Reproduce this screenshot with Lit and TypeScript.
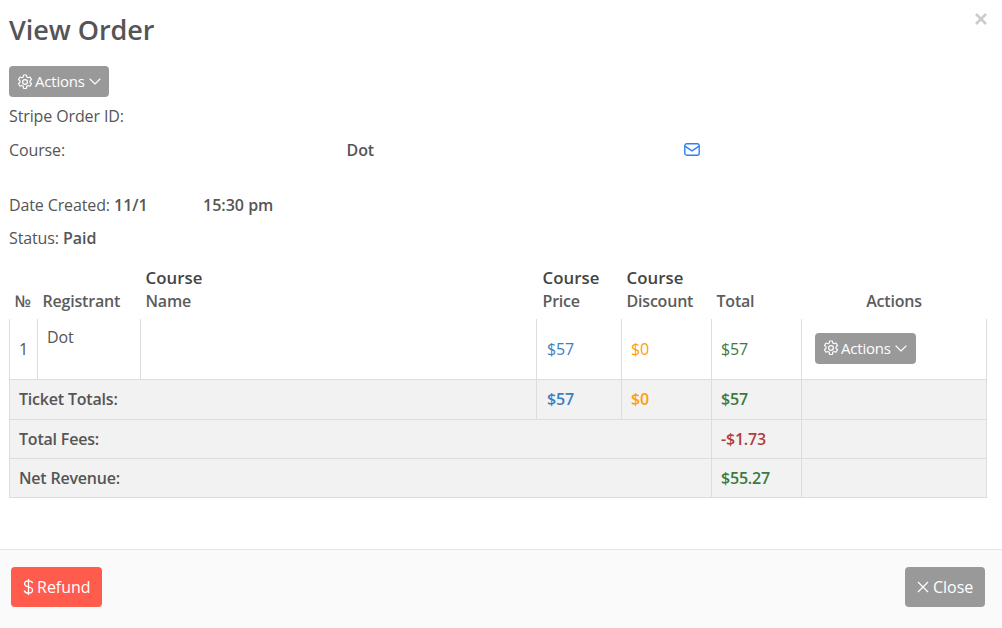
import { LitElement, html, css, svg } from 'lit';
import { customElement } from 'lit/decorators.js';

const gear = html`<svg class="ico" viewBox="0 0 16 16" fill="none" stroke="currentColor" stroke-width="1.2" stroke-linejoin="round">
  ${svg`<path d="M6.6 1h2.8l.4 2 1.3.7 1.9-.7 1.5 2.5-1.5 1.4v1.4l1.5 1.4-1.5 2.5-1.9-.7-1.3.7-.4 2.3H6.6l-.4-2.3-1.3-.7-1.9.7-1.5-2.5 1.5-1.4V6.9L1.5 5.5 3 3l1.9.7 1.3-.7z"/><circle cx="8" cy="8" r="2.4"/>`}
</svg>`;

const chevron = html`<svg class="chev" viewBox="0 0 12 7" fill="none" stroke="currentColor" stroke-width="1.1" stroke-linecap="round" stroke-linejoin="round">
  ${svg`<path d="M1 1l5 5 5-5"/>`}
</svg>`;

const cross = (size: number, weight = 1.2) => html`<svg width=${size} height=${size} viewBox="0 0 12 12" fill="none" stroke="currentColor" stroke-width=${weight}>
  ${svg`<path d="M1 1l10 10M11 1L1 11"/>`}
</svg>`;

const actions = html`<span class="btn act">${gear}<span>Actions</span>${chevron}</span>`;

@customElement('app-root')
export class AppRoot extends LitElement {
  static override styles = css`
    :host {
      display: block;
      width: 1002px;
      height: 628px;
      overflow: hidden;
      position: relative;
      background: #fff;
      color: #555;
      font-family: 'Open Sans', sans-serif;
      font-size: 16px;
      line-height: 24px;
      letter-spacing: -0.12px;
    }
    .body { height: 549px; padding: 0 15px 0 9px; box-sizing: border-box; }
    h1 {
      margin: 0;
      padding-top: 14px;
      height: 66px;
      box-sizing: border-box;
      font-size: 27px;
      line-height: 32px;
      font-weight: 600;
      letter-spacing: -0.05px;
      color: #555;
    }
    .dismiss { position: absolute; left: 975px; top: 13px; color: #ccc; display: flex; }
    .btn {
      display: inline-flex;
      align-items: center;
      box-sizing: border-box;
      height: 31px;
      border-radius: 4px;
      background: #999;
      color: #fff;
    }
    .act {
      width: 100px;
      padding-left: 8px;
      font-size: 15px;
      letter-spacing: -0.2px;
    }
    .act span { margin: -1px 4px 0 2px; }
    .ico { width: 16px; height: 16px; flex: none; }
    .chev { width: 12px; height: 7px; flex: none; }
    .bar { display: flex; }
    .line { height: 24px; white-space: nowrap; }
    .stripe { margin-top: 7px; }
    .course { margin-top: 10px; display: flex; align-items: center; }
    .course .label { width: 337.6px; }
    .course .name { width: 337.4px; font-weight: 600; }
    .mail { color: #2f80f5; display: flex; margin-top: -1px; }
    .date { margin-top: 31px; display: flex; }
    .date .day { width: 105px; }
    .date .when { width: 89px; font-weight: 600; letter-spacing: 0; }
    .status { margin-top: 9px; }
    b { font-weight: 600; letter-spacing: 0; }
    table {
      margin-top: 17px;
      width: 977px;
      border-collapse: collapse;
      table-layout: fixed;
    }
    th {
      font-weight: 600;
      text-align: left;
      vertical-align: bottom;
      padding: 0 5px 6px;
      height: 42px;
      line-height: 23px;
      color: #5c5c5c;
      letter-spacing: -0.2px;
    }
    th .top { display: block; color: #444; font-size: 16.8px; letter-spacing: 0.05px; margin-top: -1px; padding-bottom: 1px; }
    th.price { padding-left: 6px; }
    th.center { text-align: center; }
    td {
      border: 1px solid #ddd;
      padding: 0 9px;
      height: 39px;
      box-sizing: border-box;
      vertical-align: middle;
    }
    tbody tr:first-child td { border-top: none; height: 60px; }
    td.top { vertical-align: top; padding-top: 6px; }
    tr.sum td { background: #f2f2f2; font-weight: 600; letter-spacing: -0.2px; }
    tr.first td { height: 40px; }
    td.blue { color: #3a7fc1; padding-left: 10px; }
    .orange { color: #ff9d0a; }
    .green { color: #3c7a3e; }
    .red { color: #b23c3c; }
    td .act { vertical-align: middle; margin: 0 0 1px 4px; width: 101px; }
    footer {
      box-sizing: border-box;
      height: 79px;
      background: #fafafa;
      border-top: 1px solid #e5e5e5;
      padding: 17px 17px 0 11px;
      display: flex;
      justify-content: space-between;
      align-items: flex-start;
    }
    footer .btn { height: 40px; font-size: 16px; letter-spacing: 0; }
    .refund { background: #ff5c4d; width: 91px; padding-left: 12px; gap: 3px; }
    .close { width: 80px; padding-left: 12px; gap: 4px; }
    .dollar { width: 11px; height: 18px; }
  `;

  override render() {
    return html`
      <div class="body">
        <h1>View Order</h1>
        <div class="bar">${actions}</div>
        <div class="line stripe">Stripe Order ID:</div>
        <div class="line course">
          <span class="label">Course:</span>
          <span class="name">Dot</span>
          <span class="mail">
            <svg width="16" height="13" viewBox="0 0 16 13" fill="none" stroke="currentColor" stroke-width="1.4">
              <rect x="0.8" y="0.8" width="14.4" height="11.4" rx="2"/>
              <path d="M1 3.2l7 4.6 7-4.6"/>
            </svg>
          </span>
        </div>
        <div class="line date">
          <span class="day">Date Created:</span>
          <span class="when">11/1</span>
          <b>15:30 pm</b>
        </div>
        <div class="line status">Status: <b>Paid</b></div>
        <table>
          <colgroup>
            <col style="width: 28px" /><col style="width: 103px" /><col style="width: 396px" />
            <col style="width: 85px" /><col style="width: 90px" /><col style="width: 90px" />
            <col style="width: 185px" />
          </colgroup>
          <thead>
            <tr>
              <th>№</th>
              <th>Registrant</th>
              <th><span class="top">Course</span>Name</th>
              <th class="price"><span class="top">Course</span>Price</th>
              <th><span class="top">Course</span>Discount</th>
              <th>Total</th>
              <th class="center">Actions</th>
            </tr>
          </thead>
          <tbody>
            <tr>
              <td>1</td>
              <td class="top">Dot</td>
              <td></td>
              <td class="blue">$57</td>
              <td class="orange">$0</td>
              <td class="green">$57</td>
              <td>${actions}</td>
            </tr>
            <tr class="sum first">
              <td colspan="3">Ticket Totals:</td>
              <td class="blue">$57</td>
              <td class="orange">$0</td>
              <td class="green">$57</td>
              <td></td>
            </tr>
            <tr class="sum">
              <td colspan="5">Total Fees:</td>
              <td class="red">-$1.73</td>
              <td></td>
            </tr>
            <tr class="sum">
              <td colspan="5">Net Revenue:</td>
              <td class="green">$55.27</td>
              <td></td>
            </tr>
          </tbody>
        </table>
      </div>
      <span class="dismiss">${cross(12, 2.6)}</span>
      <footer>
        <span class="btn refund">
          <svg class="dollar" viewBox="0 0 11 18" fill="none" stroke="currentColor" stroke-width="1.3">
            <path d="M9.6 5.2C9.2 3.6 7.6 2.9 5.5 2.9 3.2 2.9 1.6 4 1.6 5.7c0 1.8 1.6 2.6 3.9 3.2 2.5.6 4 1.4 4 3.3 0 1.8-1.7 2.9-4 2.9-2.2 0-3.9-.9-4.3-2.6M5.5 1v16"/>
          </svg>
          <span>Refund</span>
        </span>
        <span class="btn close">${cross(12)}<span>Close</span></span>
      </footer>
    `;
  }
}
